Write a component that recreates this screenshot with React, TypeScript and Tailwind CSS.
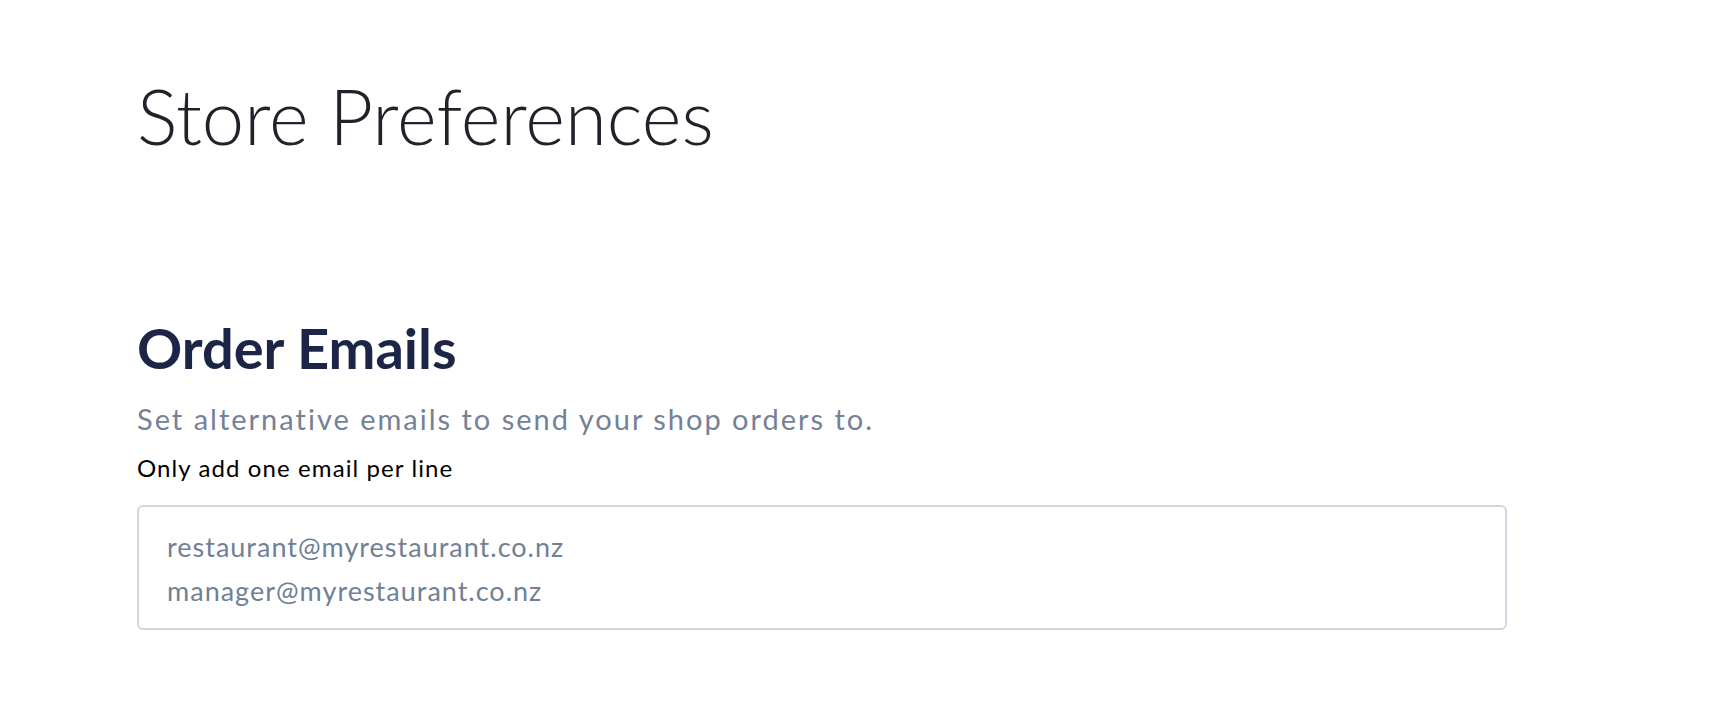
import { useState } from 'react'

export default function App() {
    const [emails, setEmails] = useState('restaurant@myrestaurant.co.nz\nmanager@myrestaurant.co.nz');

    return (
        <div className="min-h-screen bg-white font-['Lato',sans-serif] pl-[137px] pr-[229px] pt-[78px]">
            <h1 className="text-[76px] leading-none font-light text-[#1f2329]">Store Preferences</h1>

            <section className="mt-[166px]">
                <h2 className="text-[56px] leading-none font-bold text-[#1d2547]">Order Emails</h2>
                <p className="mt-[28px] text-[29px] leading-none tracking-[2px] text-[#748196]">Set alternative emails to send your shop orders to.</p>
                <label className="block mt-[23px] text-[24px] leading-none tracking-[1.1px] text-black">Only add one email per line</label>
                <textarea
                    value={emails}
                    onChange={(e) => setEmails(e.target.value)}
                    className="block mt-[25px] w-full h-[125px] resize-none rounded-[6px] border-2 border-[#cdd7e1] pl-[28px] pt-[18px] text-[27px] leading-[44px] tracking-[1px] text-[#718096] outline-none"
                />
            </section>
        </div>
    )
}
